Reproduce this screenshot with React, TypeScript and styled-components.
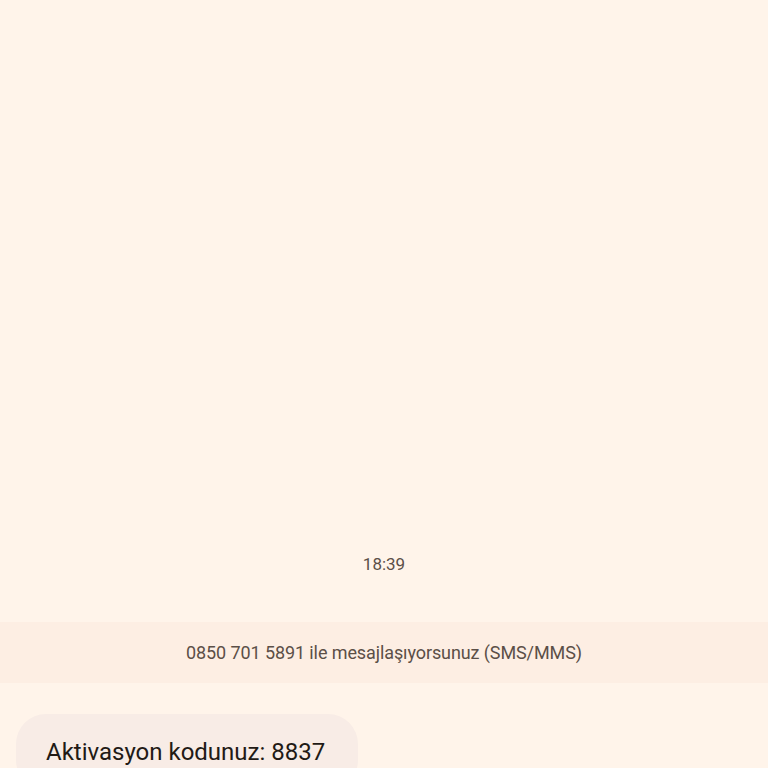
import React from "react";
import styled, { createGlobalStyle } from "styled-components";

const Global = createGlobalStyle`
  html, body { margin: 0; padding: 0; background: #fff4ea; }
  body { font-family: Roboto, "Noto Sans", sans-serif; }
`;

const Screen = styled.div`
  width: 768px;
  height: 768px;
  overflow: hidden;
  background: #fff4ea;
  display: flex;
  flex-direction: column;
  & > * { flex-shrink: 0; }
`;

const Spacer = styled.div`
  height: 552px;
`;

const Timestamp = styled.div`
  height: 24px;
  line-height: 24px;
  text-align: center;
  font-size: 17px;
  color: #5b4f47;
`;

const Banner = styled.div`
  margin-top: 46px;
  height: 61px;
  background: #fdeee3;
  display: flex;
  align-items: center;
  justify-content: center;
  font-size: 18px;
  color: #5b4f47;
  letter-spacing: -0.1px;
`;

const Thread = styled.div`
  padding: 31px 16px 0;
  display: flex;
`;

const Bubble = styled.div`
  background: #f8ece6;
  border-radius: 30px;
  padding: 24px 30px 24px 30px;
  width: 342px;
  box-sizing: border-box;
  font-size: 24px;
  line-height: 28px;
  color: #221a15;
`;

export default function App() {
  return (
    <>
      <Global />
      <Screen>
        <Spacer />
        <Timestamp>18:39</Timestamp>
        <Banner>0850 701 5891 ile mesajlaşıyorsunuz (SMS/MMS)</Banner>
        <Thread>
          <Bubble>Aktivasyon kodunuz: 8837</Bubble>
        </Thread>
      </Screen>
    </>
  );
}
